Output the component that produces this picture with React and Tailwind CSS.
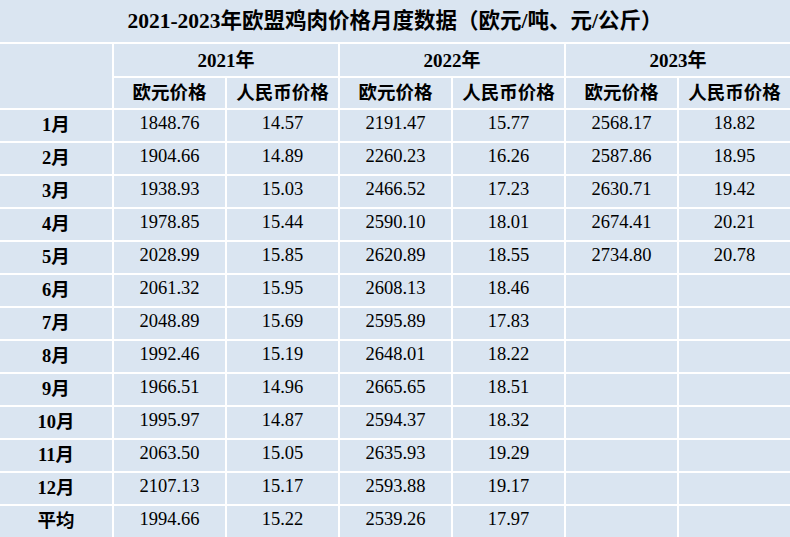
import React from "react";

const rows = [
  ["1月", "1848.76", "14.57", "2191.47", "15.77", "2568.17", "18.82"],
  ["2月", "1904.66", "14.89", "2260.23", "16.26", "2587.86", "18.95"],
  ["3月", "1938.93", "15.03", "2466.52", "17.23", "2630.71", "19.42"],
  ["4月", "1978.85", "15.44", "2590.10", "18.01", "2674.41", "20.21"],
  ["5月", "2028.99", "15.85", "2620.89", "18.55", "2734.80", "20.78"],
  ["6月", "2061.32", "15.95", "2608.13", "18.46", "", ""],
  ["7月", "2048.89", "15.69", "2595.89", "17.83", "", ""],
  ["8月", "1992.46", "15.19", "2648.01", "18.22", "", ""],
  ["9月", "1966.51", "14.96", "2665.65", "18.51", "", ""],
  ["10月", "1995.97", "14.87", "2594.37", "18.32", "", ""],
  ["11月", "2063.50", "15.05", "2635.93", "19.29", "", ""],
  ["12月", "2107.13", "15.17", "2593.88", "19.17", "", ""],
  ["平均", "1994.66", "15.22", "2539.26", "17.97", "", ""],
];

const cell = "bg-[#dae5f1] flex items-center justify-center";

export default function App() {
  return (
    <div
      className="w-[790px] h-[537px] overflow-hidden bg-white text-black"
      style={{ fontFamily: '"Liberation Serif", "Noto Sans CJK SC", serif' }}
    >
      <div className="grid grid-cols-[112px_repeat(6,111px)] grid-rows-[42px_32px_30px_repeat(13,31px)] gap-[2px]">
        <div className={`${cell} col-span-7 font-bold text-[21.5px] pt-[1px]`}>
          2021-2023年欧盟鸡肉价格月度数据（欧元/吨、元/公斤）
        </div>
        <div className={`${cell} row-span-2`}></div>
        <div className={`${cell} col-span-2 font-bold text-[19px] pt-[2px]`}>2021年</div>
        <div className={`${cell} col-span-2 font-bold text-[19px] pt-[2px]`}>2022年</div>
        <div className={`${cell} col-span-2 font-bold text-[19px] pt-[2px]`}>2023年</div>
        {[0, 1, 2].map((i) => (
          <React.Fragment key={i}>
            <div className={`${cell} font-bold text-[18.5px] pt-[2px]`}>欧元价格</div>
            <div className={`${cell} font-bold text-[18.5px] pt-[2px]`}>人民币价格</div>
          </React.Fragment>
        ))}
        {rows.map((r) => (
          <React.Fragment key={r[0]}>
            <div className={`${cell} font-bold text-[18.5px] pt-[1px]`}>{r[0]}</div>
            {r.slice(1).map((v, j) => (
              <div key={j} className={`${cell} text-[18.5px] pb-[3px]`}>
                {v}
              </div>
            ))}
          </React.Fragment>
        ))}
      </div>
    </div>
  );
}
